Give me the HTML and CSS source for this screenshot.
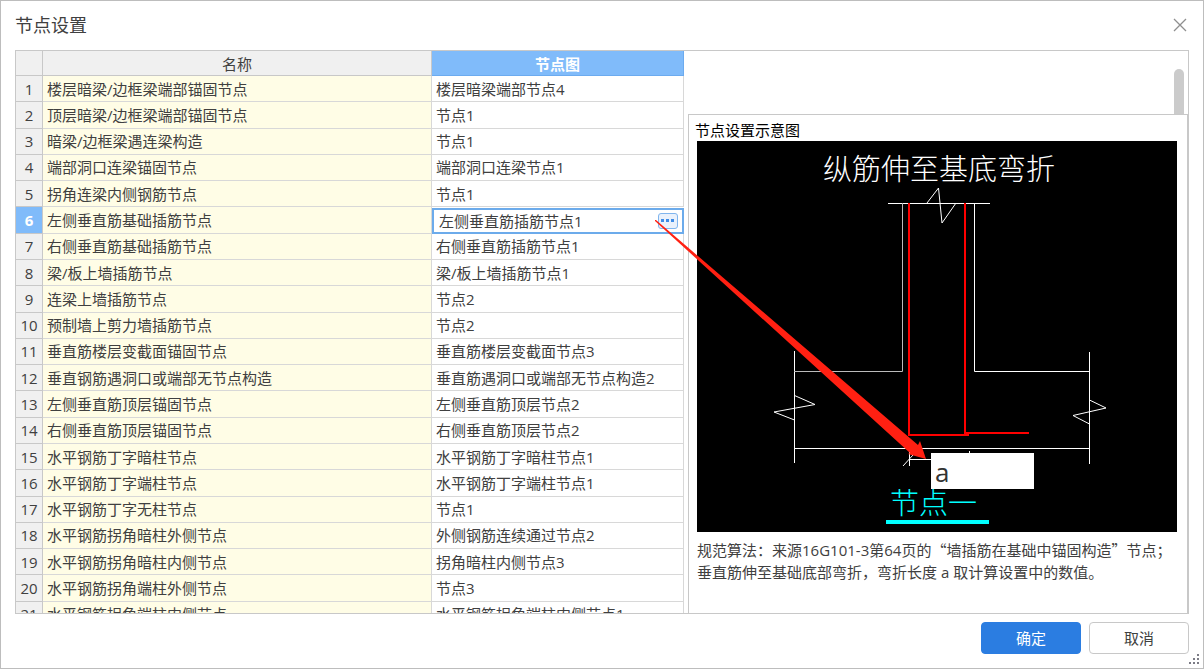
FILE: index.html
```html
<!DOCTYPE html>
<html lang="zh-CN">
<head>
<meta charset="utf-8">
<title>节点设置</title>
<link rel="stylesheet" href="styles.css">
</head>
<body>
<main class="dialog">
  <header class="titlebar">
    <h1 class="title">节点设置</h1>
    <button class="close" type="button" aria-label="关闭">
      <svg width="14" height="14" viewBox="0 0 14 14"><path d="M1 1L13 13M13 1L1 13" fill="none" stroke="#8f8f8f" stroke-width="1.3"/></svg>
    </button>
  </header>

  <div class="frame">
    <div class="table-area">
      <table class="nodes">
        <colgroup><col class="col-num"><col class="col-name"><col class="col-node"></colgroup>
        <thead>
          <tr><th class="head"></th><th class="head">名称</th><th class="head head-active">节点图</th></tr>
        </thead>
        <tbody>
          <tr><th>1</th><td class="name">楼层暗梁/边框梁端部锚固节点</td><td>楼层暗梁端部节点4</td></tr>
          <tr><th>2</th><td class="name">顶层暗梁/边框梁端部锚固节点</td><td>节点1</td></tr>
          <tr><th>3</th><td class="name">暗梁/边框梁遇连梁构造</td><td>节点1</td></tr>
          <tr><th>4</th><td class="name">端部洞口连梁锚固节点</td><td>端部洞口连梁节点1</td></tr>
          <tr><th>5</th><td class="name">拐角连梁内侧钢筋节点</td><td>节点1</td></tr>
          <tr class="selected"><th>6</th><td class="name" id="name6">左侧垂直筋基础插筋节点</td><td class="editing"><div class="editor"><input class="edit-input" type="text" value="左侧垂直筋插筋节点1" aria-labelledby="name6"><button class="more" type="button" aria-label="选择节点图"><svg width="14" height="4" viewBox="0 0 14 4"><path d="M0 0h3v3H0zM5 0h3v3H5zM10 0h3v3h-3z" fill="#3f8ce6"/></svg></button></div></td></tr>
          <tr><th>7</th><td class="name">右侧垂直筋基础插筋节点</td><td>右侧垂直筋插筋节点1</td></tr>
          <tr><th>8</th><td class="name">梁/板上墙插筋节点</td><td>梁/板上墙插筋节点1</td></tr>
          <tr><th>9</th><td class="name">连梁上墙插筋节点</td><td>节点2</td></tr>
          <tr><th>10</th><td class="name">预制墙上剪力墙插筋节点</td><td>节点2</td></tr>
          <tr><th>11</th><td class="name">垂直筋楼层变截面锚固节点</td><td>垂直筋楼层变截面节点3</td></tr>
          <tr><th>12</th><td class="name">垂直钢筋遇洞口或端部无节点构造</td><td>垂直筋遇洞口或端部无节点构造2</td></tr>
          <tr><th>13</th><td class="name">左侧垂直筋顶层锚固节点</td><td>左侧垂直筋顶层节点2</td></tr>
          <tr><th>14</th><td class="name">右侧垂直筋顶层锚固节点</td><td>右侧垂直筋顶层节点2</td></tr>
          <tr><th>15</th><td class="name">水平钢筋丁字暗柱节点</td><td>水平钢筋丁字暗柱节点1</td></tr>
          <tr><th>16</th><td class="name">水平钢筋丁字端柱节点</td><td>水平钢筋丁字端柱节点1</td></tr>
          <tr><th>17</th><td class="name">水平钢筋丁字无柱节点</td><td>节点1</td></tr>
          <tr><th>18</th><td class="name">水平钢筋拐角暗柱外侧节点</td><td>外侧钢筋连续通过节点2</td></tr>
          <tr><th>19</th><td class="name">水平钢筋拐角暗柱内侧节点</td><td>拐角暗柱内侧节点3</td></tr>
          <tr><th>20</th><td class="name">水平钢筋拐角端柱外侧节点</td><td>节点3</td></tr>
          <tr><th>21</th><td class="name">水平钢筋拐角端柱内侧节点</td><td>水平钢筋拐角端柱内侧节点1</td></tr>
        </tbody>
      </table>
    </div>

    <div class="side">
      <div class="scroll-track"><div class="scroll-thumb"></div></div>
      <section class="preview">
        <h2 class="preview-title">节点设置示意图</h2>
        <svg class="drawing" viewBox="0 0 480 391" role="img" aria-label="纵筋伸至基底弯折">
          <rect width="480" height="391" fill="#000"/>
          <text class="cad-text" x="126" y="39" fill="#fff">纵筋伸至基底弯折</text>
          <g fill="none" stroke="#fff" stroke-width="1">
            <path d="M191 62.500H293"/>
            <path d="M230 62L241.500 47L245 82L259 62"/>
            <path d="M277.500 62V230.500H393"/>
            <path d="M97.500 210V322M97 307.500H393M392.500 211V323"/>
            <path d="M97.500 254.500L118 263.500L77 271L97.500 279M392.500 259L409 267L376 274.500L392.500 283"/>
            <path d="M212.500 311V325M212 318.500H236M206 325L216 314M272.500 310V312"/>
            <path d="M205.500 62V230.500H97" stroke="#bbb"/>
          </g>
          <path d="M212 62V294H272M268 62V292H332" fill="none" stroke="#f00" stroke-width="2"/>
          <text class="cad-text" x="193" y="373" fill="#0ff">节点一</text>
          <path d="M189 381H292" stroke="#0ff" stroke-width="4"/>
          <rect x="234" y="312" width="103" height="36" fill="#fff"/>
          <text class="cad-value" x="238" y="341">a</text>
        </svg>
        <p class="note">规范算法：来源<span class="latin">16G101-3</span>第<span class="latin">64</span>页的“墙插筋在基础中锚固构造”节点；<br>垂直筋伸至基础底部弯折，弯折长度<span class="latin"> a </span>取计算设置中的数值。</p>
        <svg class="pointer" width="272" height="240" viewBox="0 0 272 240" aria-hidden="true"><path d="M0 0L1 0L263 225L265 221L271 239L253 234L255 233L0 1Z" fill="#ff2012"/></svg>
      </section>
    </div>
  </div>

  <footer class="actions">
    <button class="btn btn-primary" type="button">确定</button>
    <button class="btn" type="button">取消</button>
  </footer>
  <svg class="grip" width="11" height="11" viewBox="0 0 11 11" aria-hidden="true"><path d="M8 0h2v2H8zM4 4h2v2H4zM8 4h2v2H8zM0 8h2v2H0zM4 8h2v2H4zM8 8h2v2H8z" fill="#7c7c86"/></svg>
</main>
</body>
</html>
```

FILE: styles.css
```css
* {
  box-sizing: border-box;
}

body {
  margin: 0;
  background: #fff;
  color: #404040;
  font: 15px/20px "Open Sans", "Noto Sans CJK SC", sans-serif;
}

button,
input {
  font: inherit;
  color: inherit;
}

.dialog {
  position: relative;
  display: flex;
  flex-direction: column;
  height: 100vh;
  padding: 0 14px;
  border: 1px solid #bdbdbd;
}

.titlebar {
  display: flex;
  align-items: center;
  justify-content: space-between;
  height: 49px;
  padding: 0 1px 2px 0;
  flex: none;
}

.title {
  margin: 0;
  font-size: 18px;
  font-weight: 400;
}

.close {
  display: flex;
  padding: 1px;
  border: 0;
  background: none;
}

.frame {
  display: flex;
  flex: 1;
  min-height: 0;
  border: 1px solid #c8c8c8;
}

.table-area {
  flex: 1;
  min-width: 0;
  overflow: hidden;
}

.nodes {
  width: 100%;
  height: 577px;
  table-layout: fixed;
  border-collapse: separate;
  border-spacing: 0;
}

.nodes tbody tr {
  height: 26px;
}

.col-num {
  width: 27px;
}

.col-node {
  width: 252px;
}

.nodes th,
.nodes td {
  padding: 0 4px;
  border: 0 solid #d8d8d8;
  border-width: 0 1px 1px 0;
  text-align: left;
  white-space: nowrap;
}

.nodes th {
  padding: 0;
  background: #f0f0f0;
  border-color: #c8c8c8;
  font-weight: 400;
  text-align: center;
}

.nodes .head {
  height: 25px;
  padding-top: 2px;
}

.nodes .head-active {
  background: #80bbfa;
  border-color: #6cabef;
  color: #fff;
  font-weight: 700;
}

.nodes .name {
  background: #fffde6;
}

.nodes .selected th {
  background: #80bbfa;
  color: #fff;
  font-weight: 700;
}

.nodes .editing {
  padding: 0;
  border: 0;
}

.editor {
  display: flex;
  align-items: center;
  height: 26px;
  padding: 0 4px 0 5px;
  border: 2px solid #6cabeb;
}

.edit-input {
  flex: 1;
  min-width: 0;
  height: 20px;
  padding: 0;
  border: 0;
  background: none;
  outline: 0;
}

.more {
  display: flex;
  align-items: center;
  justify-content: center;
  width: 20px;
  height: 16px;
  padding: 0;
  border: 1px solid #80b5ee;
  border-radius: 3px;
  background: #e9f1fc;
}

.side {
  display: flex;
  flex-direction: column;
  flex: none;
  width: 504px;
  padding-left: 4px;
}

.scroll-track {
  display: flex;
  justify-content: flex-end;
  height: 63px;
  padding: 18px 4px 0 0;
}

.scroll-thumb {
  width: 10px;
  border-radius: 5px 5px 0 0;
  background: #cbcbcb;
}

.preview {
  position: relative;
  flex: 1;
  min-height: 0;
  padding: 5px 10px 0 8px;
  border: 1px solid #c8c8c8;
  border-bottom: 0;
}

.preview-title {
  margin: 0 -2px 1px;
  color: #000;
  font-size: 15px;
  font-weight: 400;
}

.drawing {
  display: block;
  width: 100%;
}

.cad-text {
  font: 29px "Noto Sans CJK SC", sans-serif;
  font-weight: 300;
}

.cad-value {
  font: 26px "Open Sans", sans-serif;
  fill: #333;
}

.note {
  margin: 7px 0 0;
  font-family: "Noto Sans CJK SC", sans-serif;
  line-height: 22px;
  white-space: nowrap;
}

.latin {
  font-family: "Open Sans", sans-serif;
}

.pointer {
  position: absolute;
  top: 105px;
  left: -34px;
}

.actions {
  display: flex;
  justify-content: flex-end;
  gap: 8px;
  flex: none;
  padding: 8px 0 14px;
}

.btn {
  width: 100px;
  height: 32px;
  border: 1px solid #c8c8c8;
  border-radius: 4px;
  background: #fff;
}

.btn-primary {
  border-color: #2b7de1;
  background: #2b7de1;
  color: #fff;
}

.grip {
  position: absolute;
  right: 3px;
  bottom: 3px;
}
```
